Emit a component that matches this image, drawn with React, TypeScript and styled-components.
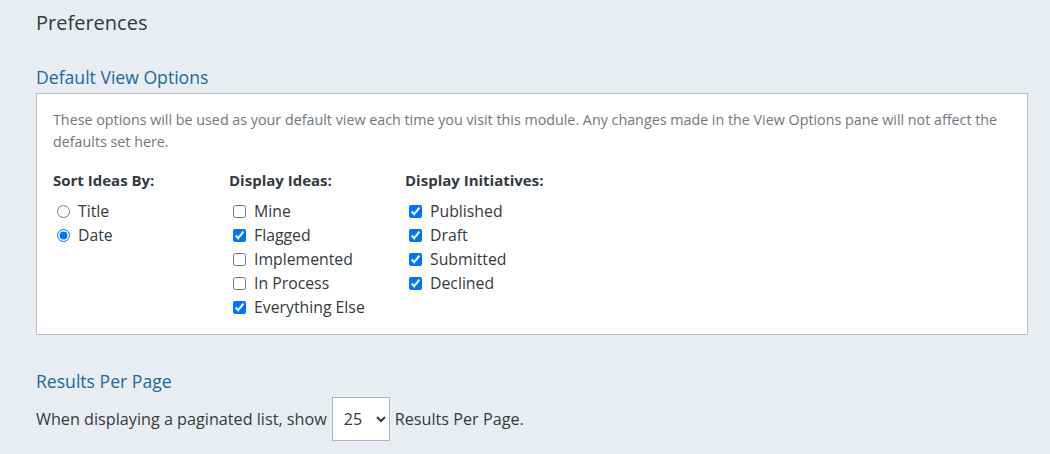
import React from 'react';
import styled, { createGlobalStyle } from 'styled-components';

const GlobalStyle = createGlobalStyle`
  html, body {
    margin: 0;
    padding: 0;
    background: #e9edf1;
  }
  body {
    font-family: 'Open Sans', 'Lato', sans-serif;
    color: #343a40;
  }
`;

const Page = styled.div`
  padding: 11px 22px 0 36px;
`;

const PageTitle = styled.h1`
  margin: 0;
  font-size: 20px;
  line-height: 24px;
  font-weight: 400;
  color: #343a40;
`;

const SectionTitle = styled.h2<{ gap: number }>`
  margin: ${({ gap }) => gap}px 0 6px;
  font-size: 17.6px;
  line-height: 20px;
  font-weight: 400;
  color: #20699a;
`;

const Panel = styled.div`
  background: #fff;
  border: 1px solid #b6bec8;
  padding: 15px 16px 15px 16px;
`;

const Intro = styled.p`
  margin: 0;
  font-size: 14.3px;
  line-height: 22px;
  color: #74777b;
`;

const Columns = styled.div`
  display: grid;
  grid-template-columns: repeat(3, 176px);
  margin-top: 17px;
`;

const Column = styled.div`
  display: flex;
  flex-direction: column;
`;

const ColumnTitle = styled.div`
  font-size: 15px;
  line-height: 20px;
  font-weight: 700;
  color: #343a40;
  margin-bottom: 9px;
`;

const Option = styled.label`
  display: flex;
  align-items: center;
  height: 24px;
  font-size: 15.8px;
  color: #343a40;

  input {
    margin: 0 3px 0 4px;
    width: 13px;
    height: 13px;
  }
  span {
    padding-left: 5px;
  }
`;

const PageSizeRow = styled.div`
  display: flex;
  align-items: center;
  gap: 5px;
  font-size: 16.2px;
  color: #343a40;
`;

const Select = styled.select`
  height: 44px;
  width: 58px;
  padding: 0 6px 0 7px;
  font-family: inherit;
  font-size: 16px;
  color: #343a40;
  background: #fff;
  border: 1px solid #aab4c0;
  border-radius: 0;
`;

const sortOptions = [
  { label: 'Title', checked: false },
  { label: 'Date', checked: true },
];

const ideaOptions = [
  { label: 'Mine', checked: false },
  { label: 'Flagged', checked: true },
  { label: 'Implemented', checked: false },
  { label: 'In Process', checked: false },
  { label: 'Everything Else', checked: true },
];

const initiativeOptions = [
  { label: 'Published', checked: true },
  { label: 'Draft', checked: true },
  { label: 'Submitted', checked: true },
  { label: 'Declined', checked: true },
];

export default function App() {
  return (
    <>
      <GlobalStyle />
      <Page>
        <PageTitle>Preferences</PageTitle>

        <SectionTitle gap={32}>Default View Options</SectionTitle>
        <Panel>
          <Intro>
            These options will be used as your default view each time you visit this module. Any
            changes made in the View Options pane will not affect the defaults set here.
          </Intro>
          <Columns>
            <Column>
              <ColumnTitle>Sort Ideas By:</ColumnTitle>
              {sortOptions.map((o) => (
                <Option key={o.label}>
                  <input type="radio" name="sort" defaultChecked={o.checked} />
                  <span>{o.label}</span>
                </Option>
              ))}
            </Column>
            <Column>
              <ColumnTitle>Display Ideas:</ColumnTitle>
              {ideaOptions.map((o) => (
                <Option key={o.label}>
                  <input type="checkbox" defaultChecked={o.checked} />
                  <span>{o.label}</span>
                </Option>
              ))}
            </Column>
            <Column>
              <ColumnTitle>Display Initiatives:</ColumnTitle>
              {initiativeOptions.map((o) => (
                <Option key={o.label}>
                  <input type="checkbox" defaultChecked={o.checked} />
                  <span>{o.label}</span>
                </Option>
              ))}
            </Column>
          </Columns>
        </Panel>

        <SectionTitle gap={36}>Results Per Page</SectionTitle>
        <PageSizeRow>
          <span>When displaying a paginated list, show</span>
          <Select defaultValue="25">
            <option value="10">10</option>
            <option value="25">25</option>
            <option value="50">50</option>
            <option value="100">100</option>
          </Select>
          <span>Results Per Page.</span>
        </PageSizeRow>
      </Page>
    </>
  );
}
